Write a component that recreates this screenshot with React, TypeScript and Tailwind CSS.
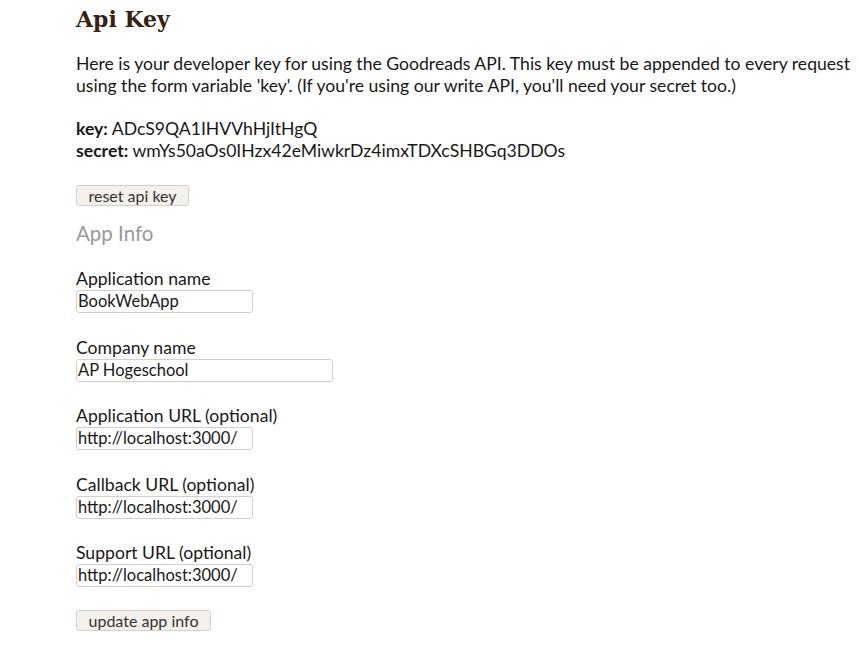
export default function App() {
  const fields = [
    { label: "Application name", value: "BookWebApp", w: "w-[177px]" },
    { label: "Company name", value: "AP Hogeschool", w: "w-[257px]" },
    { label: "Application URL (optional)", value: "http://localhost:3000/", w: "w-[177px]" },
    { label: "Callback URL (optional)", value: "http://localhost:3000/", w: "w-[177px]" },
    { label: "Support URL (optional)", value: "http://localhost:3000/", w: "w-[177px]" },
  ];

  return (
    <div className="min-h-screen bg-white pl-[76px] pt-[5px] text-[#181818] font-['Lato','Liberation_Sans',sans-serif] overflow-hidden">
      <h1 className="text-[22px] leading-[28px] font-bold text-[#382110] font-['DejaVu_Serif','Liberation_Serif',serif]">
        Api Key
      </h1>

      <p className="mt-[20px] text-[17.6px] leading-[22px] whitespace-nowrap">
        Here is your developer key for using the Goodreads API. This key must be appended to every request
        <br />
        using the form variable 'key'. (If you're using our write API, you'll need your secret too.)
      </p>

      <div className="mt-[21px] text-[17.6px] leading-[22px]">
        <div>
          <b>key:</b> ADcS9QA1IHVVhHjItHgQ
        </div>
        <div>
          <b>secret:</b> wmYs50aOs0IHzx42eMiwkrDz4imxTDXcSHBGq3DDOs
        </div>
      </div>

      <button className="block mt-[23px] h-[21px] px-[11.5px] text-[16px] leading-[19px] text-[#333] bg-[#f4f1ea] border border-[#d6d0c4] rounded-[3px]">
        reset api key
      </button>

      <h2 className="mt-[15px] text-[20.5px] leading-[24px] text-[#999999]">App Info</h2>

      <div className="mt-[23px] flex flex-col gap-[23.5px]">
        {fields.map((f) => (
          <div key={f.label} className="flex flex-col">
            <label className="text-[17.6px] leading-[22px]">{f.label}</label>
            <input
              readOnly
              value={f.value}
              className={`${f.w} h-[23px] px-[1px] text-[16.5px] text-[#181818] bg-white border border-[#d6d0c4] rounded-[3px] outline-none`}
            />
          </div>
        ))}
      </div>

      <button className="block mt-[23px] h-[21px] px-[11.5px] text-[16px] leading-[19px] text-[#333] bg-[#f4f1ea] border border-[#d6d0c4] rounded-[3px]">
        update app info
      </button>
    </div>
  );
}
